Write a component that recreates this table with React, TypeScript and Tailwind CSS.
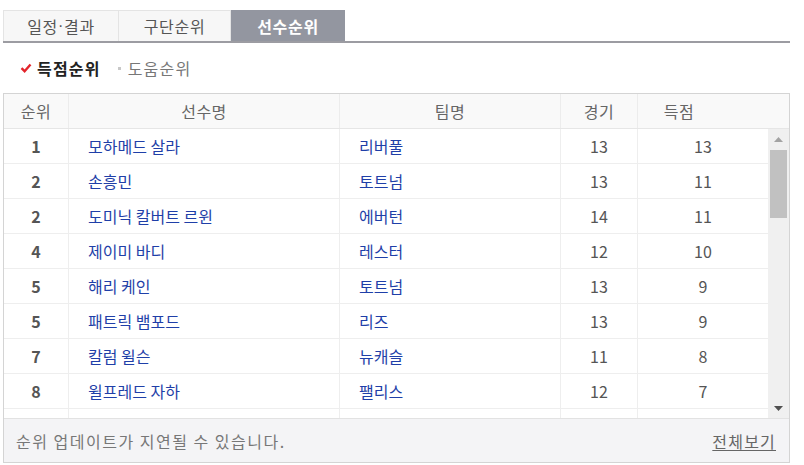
import React from 'react';

const players = [
  { rank: 1, name: '모하메드 살라', team: '리버풀', games: 13, goals: 13 },
  { rank: 2, name: '손흥민', team: '토트넘', games: 13, goals: 11 },
  { rank: 2, name: '도미닉 칼버트 르윈', team: '에버턴', games: 14, goals: 11 },
  { rank: 4, name: '제이미 바디', team: '레스터', games: 12, goals: 10 },
  { rank: 5, name: '해리 케인', team: '토트넘', games: 13, goals: 9 },
  { rank: 5, name: '패트릭 뱀포드', team: '리즈', games: 13, goals: 9 },
  { rank: 7, name: '칼럼 윌슨', team: '뉴캐슬', games: 11, goals: 8 },
  { rank: 8, name: '윌프레드 자하', team: '팰리스', games: 12, goals: 7 },
];

const App: React.FC = () => {
  return (
    <div
      className="w-[804px] h-[465px] bg-white text-[16px] overflow-hidden"
      style={{ fontFamily: '"Noto Sans CJK KR", "Noto Sans", sans-serif' }}
    >
      <div className="ml-[3px] w-[787px] pt-[10px]">
        {/* main tabs */}
        <div className="flex h-[33px] border-b-2 border-[#9c9ca2] text-[16px] tracking-[0.7px]">
          <div className="w-[116px] flex items-center justify-center bg-[#f7f7f7] border border-b-0 border-[#e4e4e4] text-[#555]">
            일정<span style={{ fontFamily: '"Liberation Sans", sans-serif' }}>·</span>결과
          </div>
          <div className="w-[112px] flex items-center justify-center bg-[#f7f7f7] border border-l-0 border-b-0 border-[#e4e4e4] text-[#555]">
            구단순위
          </div>
          <div className="w-[114px] flex items-center justify-center bg-[#9396a0] text-white font-bold">
            선수순위
          </div>
        </div>

        {/* sub tabs */}
        <div className="flex items-center h-[50px] pl-[17px] text-[16px] tracking-[1.2px]">
          <svg width="12" height="10" viewBox="0 0 12 10" className="mr-[5px]">
            <path d="M1.5 5.2 L4.6 8.2 L10.5 1.5" fill="none" stroke="#e3242b" strokeWidth="2.4" />
          </svg>
          <span className="font-bold text-[#222]">득점순위</span>
          <span className="ml-[17px] mr-[7px] w-[3px] h-[3px] bg-[#c8c8c8]" />
          <span className="text-[#777]">도움순위</span>
        </div>

        {/* table box */}
        <div className="border border-[#d4d4d4]">
          <div className="flex h-[35px] bg-[#f9f9f9] border-b border-[#e6e6e6] text-[#666] tracking-[0.5px]">
            <div className="w-[65px] flex items-center justify-center border-r border-[#ececec]">순위</div>
            <div className="w-[271px] flex items-center justify-center border-r border-[#ececec]">선수명</div>
            <div className="w-[221px] flex items-center justify-center border-r border-[#ececec]">팀명</div>
            <div className="w-[77px] flex items-center justify-center border-r border-[#ececec]">경기</div>
            <div className="w-[82px] flex items-center justify-center">득점</div>
            <div className="flex-1" />
          </div>

          <div className="flex h-[289px]">
            <div className="flex-1 overflow-hidden">
              {players.map((p, i) => (
                <div key={i} className="flex h-[35px] border-b border-[#eeeeee]">
                  <div className="w-[65px] flex items-center justify-center border-r border-[#eeeeee] font-bold text-[#555]">
                    {p.rank}
                  </div>
                  <div className="w-[271px] flex items-center pl-[19px] border-r border-[#eeeeee] text-[#1f3fa8]">
                    {p.name}
                  </div>
                  <div className="w-[221px] flex items-center pl-[19px] border-r border-[#eeeeee] text-[#1f3fa8]">
                    {p.team}
                  </div>
                  <div className="w-[77px] flex items-center justify-center border-r border-[#eeeeee] text-[#555]">
                    {p.games}
                  </div>
                  <div className="flex-1 flex items-center justify-center text-[#555]">{p.goals}</div>
                </div>
              ))}
              {/* next row, only its top edge shows */}
              <div className="flex h-[35px]">
                <div className="w-[65px] border-r border-[#eeeeee]" />
                <div className="w-[271px] border-r border-[#eeeeee]" />
                <div className="w-[221px] border-r border-[#eeeeee]" />
                <div className="w-[77px] border-r border-[#eeeeee]" />
                <div className="flex-1" />
              </div>
            </div>
            {/* scrollbar */}
            <div className="w-[21px] bg-[#f0f0f0] flex flex-col items-center">
              <div className="h-[21px] flex items-center justify-center">
                <svg width="9" height="5" viewBox="0 0 9 5">
                  <path d="M0 5 L4.5 0 L9 5 Z" fill="#a3a3a3" />
                </svg>
              </div>
              <div className="w-[17px] h-[68px] bg-[#c1c1c1]" />
              <div className="flex-1" />
              <div className="h-[20px] flex items-center justify-center">
                <svg width="9" height="5" viewBox="0 0 9 5">
                  <path d="M0 0 L9 0 L4.5 5 Z" fill="#505050" />
                </svg>
              </div>
            </div>
          </div>

          <div className="flex items-center justify-between h-[44px] bg-[#f4f4f6] border-t border-[#e2e2e2] pl-[12px] pr-[13px] text-[#777] tracking-[1.5px]">
            <span>순위 업데이트가 지연될 수 있습니다.</span>
            <a className="underline underline-offset-2 tracking-[1.2px] text-[#666]">전체보기</a>
          </div>
        </div>
      </div>
    </div>
  );
};

export default App;
